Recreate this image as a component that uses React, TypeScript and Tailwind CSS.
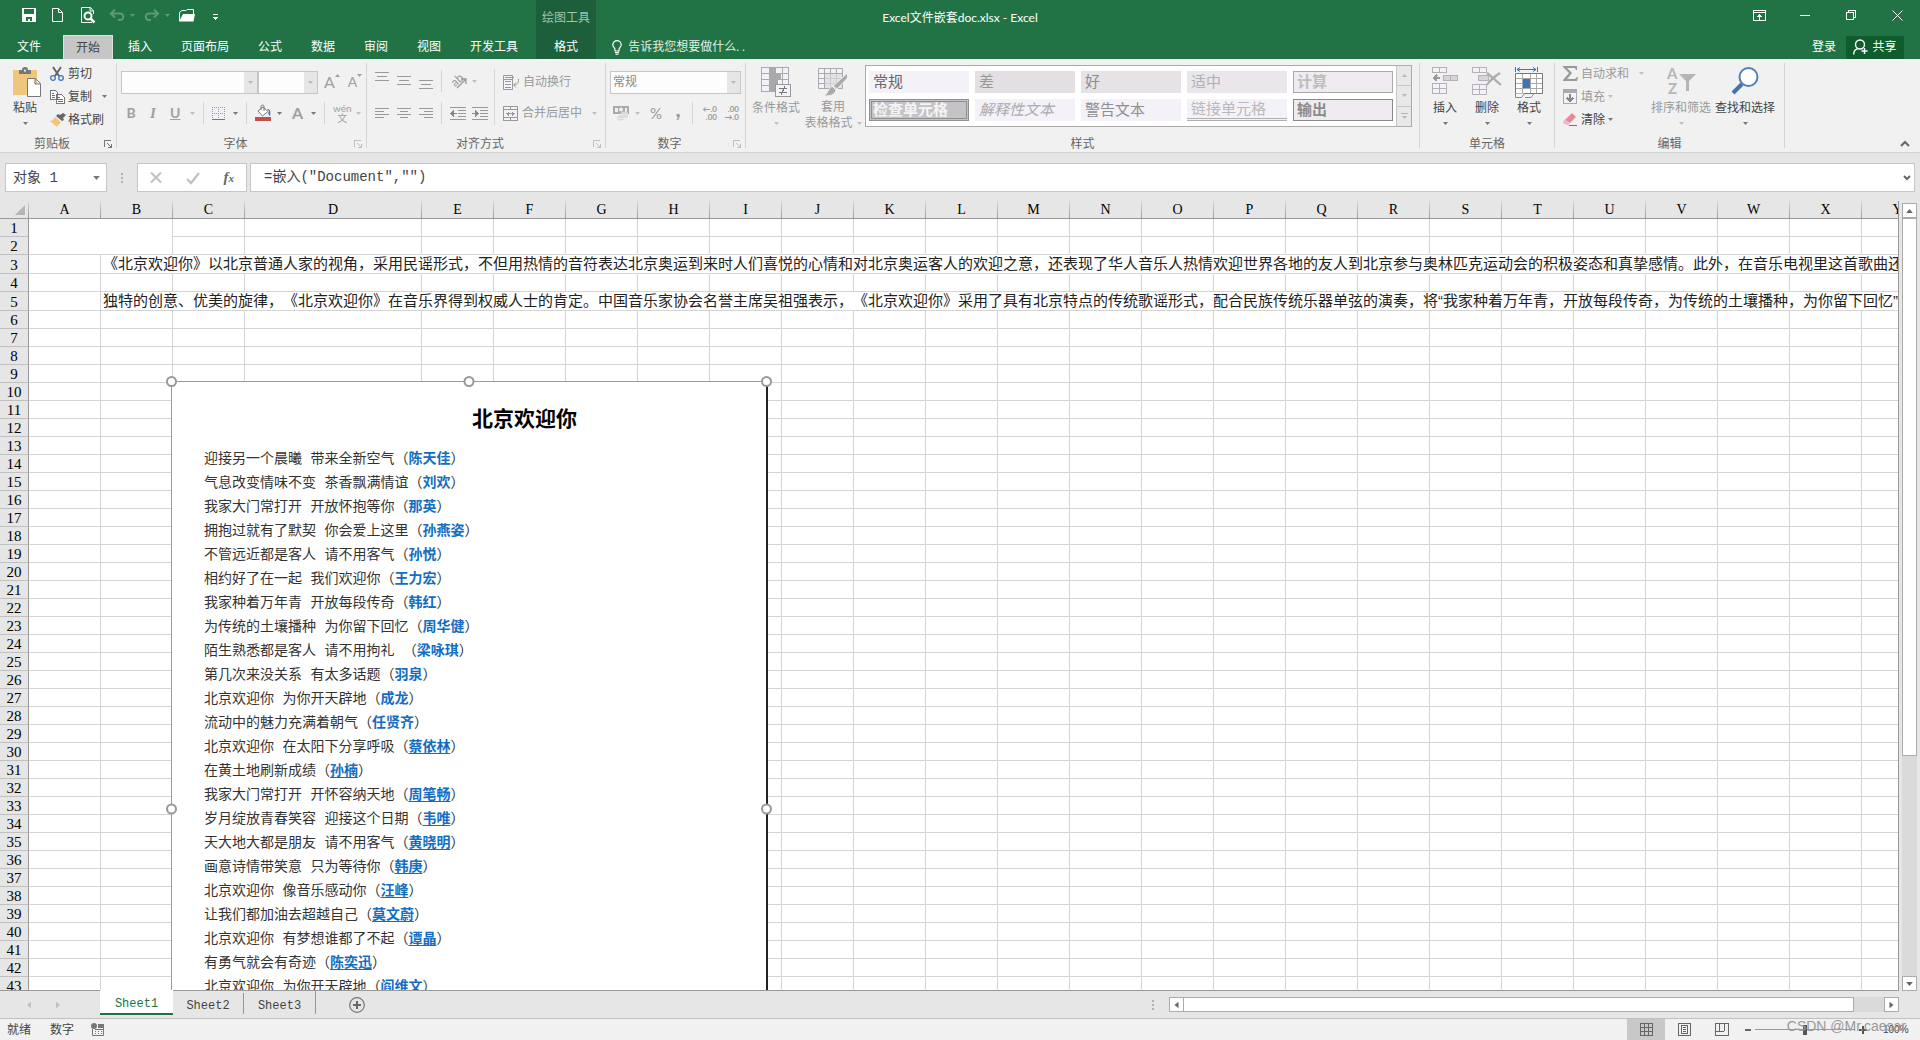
import React from "react";

type IconProps = { children: React.ReactNode; w: number; h: number; crisp?: boolean; className?: string };

const columns = "ABCDEFGHIJKLMNOPQRSTUVWXY".split("");
const rows = Array.from({ length: 43 }, (_, i) => i + 1);

const longText: Record<number, string> = {
  3: "《北京欢迎你》以北京普通人家的视角，采用民谣形式，不但用热情的音符表达北京奥运到来时人们喜悦的心情和对北京奥运客人的欢迎之意，还表现了华人音乐人热情欢迎世界各地的友人到北京参与奥林匹克运动会的积极姿态和真挚感情。此外，在音乐电视里这首歌曲还",
  5: "独特的创意、优美的旋律，《北京欢迎你》在音乐界得到权威人士的肯定。中国音乐家协会名誉主席吴祖强表示，《北京欢迎你》采用了具有北京特点的传统歌谣形式，配合民族传统乐器单弦的演奏，将“我家种着万年青，开放每段传奇，为传统的土壤播种，为你留下回忆”",
};

const lyrics: { line: string; singer: string; underline?: boolean }[] = [
  { line: "迎接另一个晨曦 带来全新空气", singer: "陈天佳" },
  { line: "气息改变情味不变 茶香飘满情谊", singer: "刘欢" },
  { line: "我家大门常打开 开放怀抱等你", singer: "那英" },
  { line: "拥抱过就有了默契 你会爱上这里", singer: "孙燕姿" },
  { line: "不管远近都是客人 请不用客气", singer: "孙悦" },
  { line: "相约好了在一起 我们欢迎你", singer: "王力宏" },
  { line: "我家种着万年青 开放每段传奇", singer: "韩红" },
  { line: "为传统的土壤播种 为你留下回忆", singer: "周华健" },
  { line: "陌生熟悉都是客人 请不用拘礼 ", singer: "梁咏琪" },
  { line: "第几次来没关系 有太多话题", singer: "羽泉" },
  { line: "北京欢迎你 为你开天辟地", singer: "成龙" },
  { line: "流动中的魅力充满着朝气", singer: "任贤齐" },
  { line: "北京欢迎你 在太阳下分享呼吸", singer: "蔡依林", underline: true },
  { line: "在黄土地刷新成绩", singer: "孙楠", underline: true },
  { line: "我家大门常打开 开怀容纳天地", singer: "周笔畅", underline: true },
  { line: "岁月绽放青春笑容 迎接这个日期", singer: "韦唯", underline: true },
  { line: "天大地大都是朋友 请不用客气", singer: "黄晓明", underline: true },
  { line: "画意诗情带笑意 只为等待你", singer: "韩庚", underline: true },
  { line: "北京欢迎你 像音乐感动你", singer: "汪峰", underline: true },
  { line: "让我们都加油去超越自己", singer: "莫文蔚", underline: true },
  { line: "北京欢迎你 有梦想谁都了不起", singer: "谭晶", underline: true },
  { line: "有勇气就会有奇迹", singer: "陈奕迅", underline: true },
  { line: "北京欢迎你 为你开天辟地", singer: "阎维文", underline: true },
];

const cellStyles = [
  { name: "常规", className: "bg-[#f5f1f8] pl-1 text-[#666]" },
  { name: "差", className: "bg-[#e3dfe2] pl-1 text-[#999]" },
  { name: "好", className: "bg-[#e6e2e5] pl-1 text-[#8c8c8c]" },
  { name: "适中", className: "bg-[#eae6eb] pl-1 text-[#b0b0b0]" },
  { name: "计算", className: "border border-[#a9a9a9] bg-[#efebf0] pl-[3px] font-bold text-[#bdbdbd]" },
  { name: "检查单元格", className: "border-3 border-double border-[#8f8f8f] bg-[#c6c3c8] pl-px font-bold text-[#f5f5f5]" },
  { name: "解释性文本", className: "bg-[#f5f1f8] pl-1 text-[#acacac] italic" },
  { name: "警告文本", className: "bg-[#f5f1f8] pl-1 text-[#8f8f8f]" },
  { name: "链接单元格", className: "border-b-3 border-double border-[#b0b0b0] bg-[#f5f1f8] pl-1 text-[#b9b9b9]" },
  { name: "输出", className: "border border-[#8a8a8a] bg-[#efebf0] pl-[3px] font-bold text-[#8c8c8c]" },
];

export default function App() {
  return (
    <div className="flex h-screen flex-col overflow-hidden bg-[#e6e6e6] font-['Lato','Noto_Sans_CJK_SC',sans-serif] text-[12px] leading-4 text-[#444]">
      <Header />
      <Ribbon />
      <FormulaBar />
      <main className="flex min-h-0 flex-1">
        <div className="relative min-w-0 flex-1 overflow-hidden border-r border-b border-[#999]">
          <Sheet />
          <EmbeddedDocument />
        </div>
        <VerticalScrollbar />
      </main>
      <SheetTabs />
      <StatusBar />
    </div>
  );
}

/* ---------- Title bar and ribbon tabs ---------- */

function Header() {
  return (
    <header className="relative flex h-[59px] shrink-0 bg-[#217346] text-white">
      <div className="flex flex-col">
        <div className="flex h-[35px] items-center pt-[5px] pl-[22px] pb-[10px]">
          <button aria-label="保存" className="mr-4">
            <Icon w={14} h={14} crisp>
              <path fill="#fff" fillRule="evenodd" d="M0 0h14v14H0zM2 1v5h10V1zM4 9h6v4H8v-2H6v2H4z" />
            </Icon>
          </button>
          <button aria-label="新建" className="mr-[18px]">
            <Icon w={11} h={14}>
              <path fill="none" stroke="#fff" d="M.5.5h6l4 4v9H.5zM6.500.5v4h4" />
            </Icon>
          </button>
          <button aria-label="打印预览" className="mr-3.5">
            <Icon w={15} h={16}>
              <path fill="none" stroke="#fff" d="M12.500 7V4L9.500.5H.5v15H11M9 .5V4h3.500" />
              <circle cx="7" cy="9" r="3.500" fill="none" stroke="#fff" strokeWidth="2" />
              <path stroke="#fff" strokeWidth="2.500" d="m9.500 11.500 4 4" />
            </Icon>
          </button>
          <button aria-label="撤消" className="mr-1.5">
            <UndoIcon />
          </button>
          <Arrow className="mr-[10px] text-[#5d9a78]" />
          <button aria-label="恢复" className="mr-1.5">
            <UndoIcon className="-scale-x-100" />
          </button>
          <Arrow className="mr-[9px] text-[#5d9a78]" />
          <button aria-label="打开" className="mr-[18px]">
            <Icon w={16} h={13}>
              <path fill="none" stroke="#fff" d="M.5 12V3.500L3 1.500h4l1-1h6.500V5" />
              <path fill="#fff" d="M0 12.500 4 5h12l-1.500 7.500z" />
            </Icon>
          </button>
          <button aria-label="自定义快速访问工具栏" className="pt-1">
            <Icon w={5} h={7} crisp>
              <path fill="#fff" d="M0 0h5v1H0zM0 3h5L2.500 6z" />
            </Icon>
          </button>
        </div>
        <nav className="flex h-6 gap-px">
          <button className="w-[62px] pr-1">文件</button>
          <button className="border border-b-0 border-[#e0e0e0] bg-[#c6c6c6] px-3 text-[#444]">开始</button>
          {["插入", "页面布局", "公式", "数据", "审阅", "视图", "开发工具"].map((tab) => (
            <button key={tab} className="px-3.5">
              {tab}
            </button>
          ))}
        </nav>
      </div>

      <div className="ml-1 flex w-[60px] flex-col items-center bg-[#1c5f3a]">
        <span className="h-[35px] pt-2.5 text-[#9fc6ae]">绘图工具</span>
        <button className="h-6 w-full">格式</button>
      </div>

      <div className="flex flex-1 flex-col">
        <div className="flex h-[35px] items-start justify-end">
          <WindowButton label="功能区显示选项">
            <Icon w={13} h={11} crisp>
              <path fill="none" stroke="#fff" d="M.5.5h12v10H.5zM1 2.500h11M6.500 4.500v5M4 6.500h1l1.500-2 1.500 2h1" />
            </Icon>
          </WindowButton>
          <WindowButton label="最小化">
            <Icon w={10} h={11} crisp>
              <path fill="#fff" d="M0 5h10v1H0z" />
            </Icon>
          </WindowButton>
          <WindowButton label="还原">
            <Icon w={10} h={10} crisp>
              <path fill="none" stroke="#fff" d="M.5 2.500h7v7h-7zM2.500 2V.5h7v7H8" />
            </Icon>
          </WindowButton>
          <WindowButton label="关闭">
            <Icon w={11} h={11}>
              <path stroke="#fff" d="m.5.5 10 10m0-10-10 10" />
            </Icon>
          </WindowButton>
        </div>
        <div className="flex h-6 items-center">
          <label className="ml-4 flex flex-1 items-center gap-1.5">
            <Icon w={10} h={15}>
              <path
                fill="none"
                stroke="#fff"
                strokeWidth="1.200"
                d="M3 11V9.500C3 8 .8 7.200.8 4.800a4.200 4.200 0 0 1 8.400 0C9.200 7.200 7 8 7 9.500V11zM3 12.500h4M3.500 14.200h3"
              />
            </Icon>
            <input
              aria-label="告诉我您想要做什么"
              placeholder="告诉我您想要做什么. ."
              className="w-40 bg-transparent outline-none placeholder:text-[#e2efe7]"
            />
          </label>
          <button className="mr-2.5">登录</button>
          <button className="mr-4 flex h-[23px] w-[58px] items-center justify-center gap-1 bg-[#0f5c2f]">
            <Icon w={15} h={16}>
              <g fill="none" stroke="#fff" strokeWidth="1.400">
                <circle cx="7" cy="5.500" r="4.500" />
                <path d="M.7 15.500c0-3 1.300-5 4-5.800M8.500 12h6M11.500 9v6" />
              </g>
            </Icon>
            共享
          </button>
        </div>
      </div>

      <h1 className="pointer-events-none absolute inset-x-0 top-2.5 text-center">Excel文件嵌套doc.xlsx - Excel</h1>
    </header>
  );
}

function WindowButton({ label, children }: { label: string; children: React.ReactNode }) {
  return (
    <button aria-label={label} className="flex h-[30px] w-[46px] items-center justify-center">
      {children}
    </button>
  );
}

/* ---------- Ribbon ---------- */

function Ribbon() {
  return (
    <section className="flex h-[94px] shrink-0 border-b border-[#d2d2d2] bg-[#f1f1f1]">
      <Group label="剪贴板" launcher="text-[#777]" className="w-[117px]">
        <div className="flex">
          <BigButton label="粘贴" className="ml-1.5 w-[38px]">
            <Icon w={28} h={30} className="ml-1">
              <path fill="#eec77c" d="M0 3h24v25H0z" />
              <path fill="#777" d="M6 3h3a3 3 0 0 1 6 0h3v4H6z" />
              <path fill="#f1f1f1" d="M11 3.500a1 1 0 0 1 2 0v1h-2z" />
              <path fill="#fff" stroke="#777" d="M14.500 11.500h8l5 5v13h-13zM22 11.500v5.500h5.500" />
            </Icon>
          </BigButton>
          <div className="ml-1.5 flex flex-col pt-[3px]">
            <SmallButton label="剪切">
              <Icon w={14} h={14}>
                <path stroke="#666" strokeWidth="2" d="m3 0 6 9M11 0 5 9" />
                <circle cx="3" cy="11" r="2.300" fill="none" stroke="#3e74b8" strokeWidth="1.300" />
                <circle cx="11" cy="11" r="2.300" fill="none" stroke="#3e74b8" strokeWidth="1.300" />
              </Icon>
            </SmallButton>
            <SmallButton label="复制" arrow="ml-2.5">
              <Icon w={15} h={14} crisp>
                <path fill="#fff" stroke="#777" d="M.5.5h5l2 2v7h-7zM6.500 4.500h5l3 3v6h-8z" />
                <path stroke="#3e74b8" d="M2 3.500h2M2 5.500h3M2 7.500h3M8 7.500h2M8 9.500h5M8 11.500h5" />
              </Icon>
            </SmallButton>
            <SmallButton label="格式刷">
              <Icon w={16} h={14}>
                <path fill="#666" d="M13 0 16 2l-3 3 1 2-2 1-6-5 2-2 2 1z" />
                <path fill="#eec77c" d="m5 4 6 5-4 5-7-6c2 0 4-2 5-4z" />
              </Icon>
            </SmallButton>
          </div>
        </div>
      </Group>

      <Group label="字体" launcher="text-[#c0c0c0]" className="w-[250px]">
        <div className="flex h-11 items-center pt-0.5 pl-1">
          <Combo label="字体" width="w-[137px]" />
          <Combo label="字号" width="w-[60px]" />
          <button aria-label="增大字号" className="ml-1.5 flex items-start text-[16px] text-[#a0a0a0]">
            A
            <Arrow className="rotate-180" />
          </button>
          <button aria-label="减小字号" className="ml-2 flex items-start text-[14px] text-[#a0a0a0]">
            A
            <Arrow />
          </button>
        </div>
        <div className="flex h-5 items-center pl-[9px] text-[14px] text-[#a0a0a0]">
          <button className="w-[10px] font-bold">B</button>
          <button className="ml-3 w-[10px] font-['Liberation_Serif',serif] text-[15px] font-bold italic">I</button>
          <button className="ml-3 w-[10px] font-bold underline">U</button>
          <Arrow className="ml-2.5 text-[#c0c0c0]" />
          <Divider className="mx-2" />
          <button aria-label="边框">
            <Icon w={13} h={13} crisp>
              <path fill="#f5f1f8" d="M0 0h13v13H0z" />
              <path stroke="#999" strokeDasharray="1 1" d="M0 .5h13M0 6.500h13M.5 0v12M6.500 0v12M12.500 0v12" />
              <path stroke="#777" d="M0 12.500h13" />
            </Icon>
          </button>
          <Arrow className="ml-2 text-[#777]" />
          <Divider className="mx-2" />
          <button aria-label="填充颜色">
            <Icon w={16} h={16}>
              <path fill="#fff" stroke="#777" d="m3 6 5-4 5 4.500L7.500 11z" />
              <path fill="none" stroke="#777" d="M6 5V1.500a1.500 1.500 0 0 1 3 0V6" />
              <path fill="#3e74b8" d="M12 4c3 0 4 2 3 7-2-1-2-3-1-5z" />
              <path fill="#c0504d" d="M0 12h16v4H0z" />
            </Icon>
          </button>
          <Arrow className="ml-1.5 text-[#777]" />
          <button className="ml-2.5 w-[11px] text-[16px] font-bold">A</button>
          <Arrow className="ml-2 text-[#777]" />
          <Divider className="mx-2" />
          <button aria-label="拼音指南" className="flex flex-col items-center text-[10px] leading-[10px]">
            <span>wén</span>
            <span>文</span>
          </button>
          <Arrow className="ml-1 text-[#c0c0c0]" />
        </div>
      </Group>

      <Group label="对齐方式" launcher="text-[#c0c0c0]" className="w-[239px]">
        <div className="flex">
          <div className="pl-2">
            <div className="flex h-11 items-center gap-2">
              <LinesIcon label="顶端对齐" d="M0 .5h14M2 4.500h10M0 8.500h14" className="pb-2" />
              <LinesIcon label="垂直居中" d="M0 .5h14M2 4.500h10M0 8.500h14" />
              <LinesIcon label="底端对齐" d="M0 .5h14M2 4.500h10M0 8.500h14" className="pt-2" />
              <Divider />
              <button aria-label="方向" className="flex items-center gap-1 text-[#a0a0a0]">
                <Icon w={18} h={16}>
                  <text x="1" y="12" fontSize="12" fill="#999" transform="rotate(-42 6 8)">
                    ab
                  </text>
                  <path fill="none" stroke="#999" strokeWidth="1.300" d="m7 15 8-8M11 6h5v5" />
                </Icon>
                <Arrow className="text-[#c0c0c0]" />
              </button>
            </div>
            <div className="flex h-5 items-center gap-2">
              <LinesIcon label="左对齐" d="M0 .5h14M0 3.500h9M0 6.500h14M0 9.500h9" />
              <LinesIcon label="居中" d="M0 .5h14M3 3.500h8M0 6.500h14M3 9.500h8" />
              <LinesIcon label="右对齐" d="M0 .5h14M5 3.500h9M0 6.500h14M5 9.500h9" />
              <Divider />
              <button aria-label="减少缩进量">
                <Icon w={16} h={13} crisp>
                  <path stroke="#999" d="M0 .5h16M8 3.500h8M8 6.500h8M8 9.500h8M0 12.500h16" />
                  <path fill="#888" d="M0 6.500 3 3h1v3h3v1H4v3H3z" />
                </Icon>
              </button>
              <button aria-label="增加缩进量" className="-ml-0.5">
                <Icon w={16} h={13} crisp>
                  <path stroke="#999" d="M0 .5h16M8 3.500h8M8 6.500h8M8 9.500h8M0 12.500h16" />
                  <path fill="#888" d="M7 6.500 4 3H3v3H0v1h3v3h1z" />
                </Icon>
              </button>
            </div>
          </div>
          <div className="mt-2.5 ml-1.5 h-14 w-px bg-[#d8d8d8]" />
          <div className="pl-2 text-[#999]">
            <button className="flex h-11 items-center gap-1 pt-0.5">
              <Icon w={16} h={15}>
                <path fill="#f5f1f8" stroke="#999" d="M.5.5h9v4h-9zM.5 4.500h9v10h-9z" />
                <path fill="none" stroke="#999" d="M2 2.500h9M2 6.500h6M2 9.500h6M2 12.500h6M15.500 4c0 4-1 6-4.500 6M13 7.500 10.500 10l2.500 2.500" />
              </Icon>
              自动换行
            </button>
            <button className="flex h-5 items-center gap-1">
              <Icon w={15} h={15} crisp>
                <path fill="#f5f1f8" stroke="#999" d="M.5.5h14v14H.5zM0 3.500h15M0 11.500h15M7.500 0v3M7.500 12v3" />
                <path stroke="#999" d="M3 7.500h9M5.500 5.500v4M9.500 5.500v4M4.500 6.500v2M10.500 6.500v2" />
              </Icon>
              合并后居中
              <Arrow className="ml-1.5 text-[#c0c0c0]" />
            </button>
          </div>
        </div>
      </Group>

      <Group label="数字" launcher="text-[#c0c0c0]" className="w-[140px]">
        <div className="flex h-11 items-center pt-0.5 pl-1">
          <Combo label="数字格式" width="w-[131px]" value="常规" />
        </div>
        <div className="flex h-5 items-center pl-[7px] text-[#999]">
          <button aria-label="会计数字格式">
            <Icon w={16} h={16}>
              <path fill="#aaa" d="M0 1h16v8H0z" />
              <path fill="#f1f1f1" d="M2 3h3v4H2zM12 3h2v4h-2z" />
              <circle cx="8" cy="4.500" r="2" fill="#f1f1f1" />
              <path fill="#dcd6dd" d="M8 8c0-2 7-2 7 0v3c0 2-7 2-7 0zM4 12c0-2 7-2 7 0v2c0 2-7 2-7 0z" />
              <path fill="none" stroke="#f1f1f1" d="M8 9c1 1.500 6 1.500 7 0M4 12.500c1 1.500 6 1.500 7 0" />
            </Icon>
          </button>
          <Arrow className="ml-1.5 text-[#c0c0c0]" />
          <button className="ml-2.5 w-3 text-[15px]">%</button>
          <button className="ml-3 w-2 pb-2 text-[22px] font-bold">,</button>
          <Divider className="mr-2 ml-2.5" />
          <button aria-label="增加小数位数">
            <DecimalIcon top="←.0" bottom=".00" />
          </button>
          <button aria-label="减少小数位数" className="ml-1.5">
            <DecimalIcon top=".00" bottom="→.0" />
          </button>
        </div>
      </Group>

      <Group label="样式" className="w-[674px]">
        <div className="flex">
          <BigButton label="条件格式" disabled className="ml-1.5 w-12">
            <Icon w={30} h={30} crisp>
              <path fill="#f5f1f8" stroke="#aaa" d="M.5.5h27v24H.5zM0 6.500h27M0 12.500h27M0 18.500h27M8.500 0v25M14.500 0v25M21.500 0v25" />
              <path fill="#aaa" d="M8 0h6v7H8zM8 7h12v6H8zM8 13h9v6H8zM8 19h6v6H8z" />
              <path fill="#f5f1f8" stroke="#999" d="M14.500 17.500h15v12h-15z" />
              <path stroke="#777" d="M18 21.500h8M18 25.500h8M24 19l-4 9" />
            </Icon>
          </BigButton>
          <button className="ml-1.5 flex w-[54px] flex-col items-center pt-[9px] text-[#999]">
            <Icon w={30} h={29}>
              <path fill="#f5f1f8" stroke="#aaa" d="M.5.5h24v20H.5zM0 5.500h24M0 10.500h24M0 15.500h24M6.500 0v20M12.500 0v20M18.500 0v20" />
              <path fill="#dcd8de" fillOpacity=".7" d="M7 6h17v14H7z" />
              <path fill="#aaa" stroke="#f1f1f1" d="M29.500 5v5L19 21l-4-3zM14 18l4 4c-1 5-6 6-12 6 4-2 4-8 8-10z" />
            </Icon>
            <span className="mt-0.5">套用</span>
            <span className="flex items-center gap-1 whitespace-nowrap">
              表格格式
              <Arrow className="text-[#c0c0c0]" />
            </span>
          </button>
          <div className="mt-1.5 ml-[5px] flex h-[62px] border border-[#ababab] bg-white">
            <div className="grid grid-cols-[repeat(5,100px)] grid-rows-[22px_22px] gap-1.5 px-[3px] pt-[5px]">
              {cellStyles.map((style) => (
                <button
                  key={style.name}
                  className={`flex items-center pb-0.5 text-left text-[15px] leading-4 ${style.className}`}
                >
                  {style.name}
                </button>
              ))}
            </div>
            <div className="flex w-[15px] flex-col divide-y divide-[#c6c6c6] border-l border-[#c6c6c6] bg-[#e8e8e8] text-[#b8b8b8]">
              <button aria-label="上一行" className="flex flex-1 items-center justify-center">
                <Arrow className="rotate-180" />
              </button>
              <button aria-label="下一行" className="flex flex-1 items-center justify-center">
                <Arrow />
              </button>
              <button aria-label="其他" className="flex flex-1 flex-col items-center justify-center gap-0.5">
                <span className="h-px w-[7px] bg-current" />
                <Arrow />
              </button>
            </div>
          </div>
        </div>
      </Group>

      <Group label="单元格" className="w-[135px]">
        <div className="flex pl-1">
          <BigButton label="插入" className="w-[42px]">
            <Icon w={27} h={28} crisp>
              <path fill="#f5f1f8" stroke="#b5b0b6" d="M.5.5h14v5H.5zM7.500 1v5M.5 16.500h14v10H.5zM7.500 17v10M1 21.500h14" />
              <path fill="#d8d4da" stroke="#b5b0b6" d="M11.500 8.500h14v5h-14zM18.500 9v5" />
              <path fill="none" stroke="#999" strokeWidth="2" d="M2 11h6M5 8l-3 3 3 3" />
            </Icon>
          </BigButton>
          <BigButton label="删除" className="w-[42px]">
            <Icon w={30} h={28}>
              <path fill="#f5f1f8" stroke="#b5b0b6" d="M.5.5h14v5H.5zM7.500 1v5M.5 17.500h14v10H.5zM7.500 18v10M1 22.500h14" />
              <path fill="#d8d4da" stroke="#b5b0b6" d="M6.500 8.500h10v5h-10z" />
              <path stroke="#b0acb1" strokeWidth="2.200" d="M15 6c4 3 9 8 14 12M28 6c-5 3-10 7-13 12" />
            </Icon>
          </BigButton>
          <BigButton label="格式" className="w-[42px]">
            <Icon w={28} h={31}>
              <path fill="none" stroke="#3e74b8" d="M.5 0v5M22.500 0v5M2 2.500h19M5 .5l-3 2 3 2M18 .5l3 2-3 2" />
              <path fill="#fff" stroke="#777" d="M.5 6.500h27v20H.5z" />
              <path fill="none" stroke="#aaa" d="M1 11.500h26M1 21.500h26M7.500 7v19M15.500 7v19M21.500 7v19M1 16.500h7M16 16.500h11" />
              <path fill="#3e74b8" d="M8 12h7v9H8z" />
              <path fill="#f8f8f8" stroke="#888" d="M.5 26.500v4h6l3-4M10 30.500h6l3-4" />
            </Icon>
          </BigButton>
        </div>
      </Group>

      <Group label="编辑" className="w-[230px]">
        <div className="flex">
          <div className="flex w-[91px] flex-col pt-[3px] pl-2">
            <SmallButton label="自动求和" disabled arrow="ml-2.5">
              <Icon w={15} h={15}>
                <path fill="#999" d="M0 0h14v4h-1l-1-2H4l5 5-5 6h8l2-2h1l-1 4H0v-1l6-7-6-6z" />
              </Icon>
            </SmallButton>
            <SmallButton label="填充" disabled arrow="ml-[3px]">
              <Icon w={15} h={15} crisp>
                <path fill="#f5f1f8" stroke="#aaa" d="M.5.5h13v14H.5z" />
                <path fill="#aaa" d="M0 0h14v4H0z" />
                <path fill="none" stroke="#888" strokeWidth="2" d="M7 5v7M4 9l3 3 3-3" />
              </Icon>
            </SmallButton>
            <SmallButton label="清除" arrow="ml-[3px]">
              <Icon w={15} h={13}>
                <path fill="#e8899a" d="m9 0 4 4-6 6-5-3z" />
                <path fill="#f2b7c1" d="m2 6 5 5-2 1-4-1-1-2z" />
                <path stroke="#777" d="M6 12.500h8" />
              </Icon>
            </SmallButton>
          </div>
          <BigButton label="排序和筛选" disabled className="ml-0.5 w-[66px]">
            <Icon w={29} h={28}>
              <text x="0" y="12" fontSize="15" fontWeight="bold" fill="#b5b5b5">
                A
              </text>
              <text x="1" y="27" fontSize="15" fontWeight="bold" fill="#b5b5b5">
                Z
              </text>
              <path fill="#b5b5b5" d="M12 7h17l-7 7v10h-3V14z" />
            </Icon>
          </BigButton>
          <BigButton label="查找和选择" className="w-[62px]">
            <Icon w={28} h={28}>
              <path stroke="#4472ae" strokeWidth="4" d="m2 26 9-9" />
              <circle cx="17.500" cy="10" r="9" fill="#fff" stroke="#4a80bd" strokeWidth="2" />
            </Icon>
          </BigButton>
        </div>
      </Group>

      <div className="flex flex-1 items-end justify-end pr-2.5 pb-[5px]">
        <button aria-label="折叠功能区">
          <Icon w={10} h={7}>
            <path fill="none" stroke="#666" strokeWidth="2" d="m1 6 4-4 4 4" />
          </Icon>
        </button>
      </div>
    </section>
  );
}

function Group({
  label,
  launcher,
  className,
  children,
}: {
  label: string;
  launcher?: string;
  className: string;
  children: React.ReactNode;
}) {
  return (
    <div className={`flex shrink-0 ${className}`}>
      <div className="flex min-w-0 flex-1 flex-col">
        <div className="flex-1">{children}</div>
        <div className="flex h-4 items-center">
          <span className="flex-1 text-center text-[#666]">{label}</span>
          {launcher && (
            <button aria-label={`${label}设置`} className={`mr-1 ${launcher}`}>
              <Icon w={8} h={8} crisp>
                <path fill="none" stroke="currentColor" d="M.5 7V.5H7M3 3l4 4M7.500 4v3.500H4" />
              </Icon>
            </button>
          )}
        </div>
      </div>
      <div className="my-1 w-px bg-[#d5d5d5]" />
    </div>
  );
}

function BigButton({
  label,
  disabled,
  className,
  children,
}: {
  label: string;
  disabled?: boolean;
  className: string;
  children: React.ReactNode;
}) {
  return (
    <button className={`flex flex-col items-center pt-2 ${disabled ? "text-[#999]" : "text-[#444]"} ${className}`}>
      <span className="flex h-[33px] items-start">{children}</span>
      <span className="whitespace-nowrap">{label}</span>
      <Arrow className={`mt-1.5 ${disabled ? "text-[#c0c0c0]" : "text-[#777]"}`} />
    </button>
  );
}

function SmallButton({
  label,
  disabled,
  arrow,
  children,
}: {
  label: string;
  disabled?: boolean;
  arrow?: string;
  children: React.ReactNode;
}) {
  return (
    <button className={`flex h-[23px] items-center whitespace-nowrap ${disabled ? "text-[#999]" : "text-[#444]"}`}>
      <span className="w-[18px] shrink-0">{children}</span>
      {label}
      {arrow && <Arrow className={`${arrow} ${disabled ? "text-[#c0c0c0]" : "text-[#777]"}`} />}
    </button>
  );
}

function Combo({ label, width, value = "" }: { label: string; width: string; value?: string }) {
  return (
    <div className={`flex h-[23px] border border-[#c6c6c6] bg-[#fdfdfd] ${width}`}>
      <input aria-label={label} defaultValue={value} className="w-0 flex-1 pl-0.5 text-[#888] outline-none" />
      <button aria-label={`${label}列表`} className="flex w-[13px] items-center justify-center bg-[#e6e6e6] text-[#b8b8b8]">
        <Arrow />
      </button>
    </div>
  );
}

/* ---------- Formula bar ---------- */

function FormulaBar() {
  return (
    <section className="flex h-12 shrink-0 pt-2.5 pr-[5px] pb-[9px] pl-[5px] font-['Liberation_Mono','Noto_Sans_CJK_SC',monospace] text-[14px]">
      <div className="flex w-[102px] items-center border border-[#c6c6c6] bg-white pr-1.5">
        <input aria-label="名称框" defaultValue="对象 1" className="w-0 flex-1 pl-[7px] outline-none" />
        <Arrow className="h-1 w-[7px] text-[#777]" />
      </div>
      <div className="flex w-[30px] flex-col items-center justify-center gap-0.5">
        <span className="size-0.5 bg-[#b0b0b0]" />
        <span className="size-0.5 bg-[#b0b0b0]" />
        <span className="size-0.5 bg-[#b0b0b0]" />
      </div>
      <div className="flex w-[110px] items-center justify-between border border-[#c6c6c6] bg-white px-3">
        <button aria-label="取消">
          <Icon w={12} h={11}>
            <path stroke="#c0c0c0" strokeWidth="2" d="m1 .5 10 10M11 .5l-10 10" />
          </Icon>
        </button>
        <button aria-label="输入">
          <Icon w={14} h={12}>
            <path fill="none" stroke="#c0c0c0" strokeWidth="2.200" d="m1 7 4 4 8-10" />
          </Icon>
        </button>
        <button className="font-['Liberation_Serif',serif] text-[15px] font-bold text-[#666] italic">
          f<span className="text-[11px]">x</span>
        </button>
      </div>
      <div className="ml-[3px] flex flex-1 items-center border border-[#c6c6c6] bg-white pr-[3px]">
        <input
          aria-label="编辑栏"
          defaultValue={'=嵌入("Document","")'}
          className="w-0 flex-1 pb-0.5 pl-[13px] outline-none"
        />
        <button aria-label="展开编辑栏">
          <Icon w={8} h={6}>
            <path fill="none" stroke="#666" strokeWidth="2" d="m1 1 3 3 3-3" />
          </Icon>
        </button>
      </div>
    </section>
  );
}

/* ---------- Worksheet ---------- */

function Sheet() {
  return (
    <table className="w-[1934px] table-fixed border-separate border-spacing-0 bg-white font-['Liberation_Serif','Noto_Sans_CJK_SC',serif] text-[15px] leading-4 text-[#222]">
      <colgroup>
        <col className="w-[29px]" />
        {columns.map((col) => (
          <col key={col} className={col === "D" ? "w-[177px]" : "w-[72px]"} />
        ))}
      </colgroup>
      <thead>
        <tr>
          <th
            aria-label="全选"
            className="h-[18px] border-b border-[#999] bg-[#e6e6e6] bg-linear-to-b from-[#d8d8d8] to-[#999] bg-[length:1px_100%] bg-right bg-no-repeat p-0"
          >
            <Icon w={10} h={10} className="ml-[15px]">
              <path fill="#b5b5b5" d="M10 0v10H0z" />
            </Icon>
          </th>
          {columns.map((col) => (
            <th
              key={col}
              className="h-[18px] border-b border-[#999] bg-[#e6e6e6] bg-linear-to-b from-[#d8d8d8] to-[#999] bg-[length:1px_100%] bg-right bg-no-repeat p-0 pt-px pr-px text-[14px] font-normal text-black"
            >
              {col}
            </th>
          ))}
        </tr>
      </thead>
      <tbody>
        {rows.map((row) => (
          <SheetRow key={row} row={row} />
        ))}
      </tbody>
    </table>
  );
}

function SheetRow({ row }: { row: number }) {
  const text = longText[row];
  const height = text ? "h-[19px]" : "h-[18px]";
  const cell = `border-r border-b border-[#d4d4d4] p-0 ${height}`;

  // A1:B2 is one merged cell, and the long text runs over every cell right of B
  let cells = columns;
  if (row === 1) cells = columns.slice(1);
  if (row === 2) cells = columns.slice(2);
  if (text) cells = columns.slice(0, 2);

  return (
    <tr>
      <th className={`border-r border-b border-r-[#999] border-b-[#c0c0c0] bg-[#e6e6e6] p-0 pt-px font-normal text-black ${height}`}>
        {row}
      </th>
      {cells.map((col, i) => {
        if (row === 1 && i === 0) return <td key={col} colSpan={2} rowSpan={2} className={cell} />;
        if (text && i === 1) {
          return (
            <td
              key={col}
              colSpan={24}
              className={`${cell} pl-0.5 whitespace-nowrap [text-spacing-trim:space-all] ${
                row === 5 ? "font-['Liberation_Sans','Noto_Sans_CJK_SC',sans-serif]" : ""
              }`}
            >
              {text}
            </td>
          );
        }
        return <td key={col} className={cell} />;
      })}
    </tr>
  );
}

function EmbeddedDocument() {
  return (
    <article className="absolute top-[180px] left-[171px] h-[856px] w-[597px] border border-r-2 border-[#999] border-r-[#222] bg-white font-['Liberation_Mono','Noto_Sans_CJK_SC',monospace]">
      <h2 className="pt-[25px] pl-[300px] text-[21px] leading-7 font-bold text-black">北京欢迎你</h2>
      <div className="pt-3 pl-8 text-[14px] leading-6 whitespace-pre text-[#333] [text-spacing-trim:space-all]">
        {lyrics.map(({ line, singer, underline }, i) => (
          <p key={i}>
            {line}（
            <a href="#" className={`font-bold text-[#136ec2] ${underline ? "underline underline-offset-2" : ""}`}>
              {singer}
            </a>
            ）
          </p>
        ))}
      </div>
      <Handle className="-top-1.5 -left-1.5" />
      <Handle className="-top-1.5 left-1/2 -translate-x-1/2" />
      <Handle className="-top-1.5 -right-1.5" />
      <Handle className="top-1/2 -left-1.5 -translate-y-1/2" />
      <Handle className="top-1/2 -right-1.5 -translate-y-1/2" />
    </article>
  );
}

function Handle({ className }: { className: string }) {
  return <span className={`absolute size-[11px] rounded-full border-2 border-[#999] bg-white ${className}`} />;
}

function VerticalScrollbar() {
  return (
    <div className="flex w-[21px] flex-col pt-0.5 pr-[3px] pl-[3px]">
      <button aria-label="向上滚动" className="flex h-[15px] items-center justify-center border border-[#ababab] bg-white text-[#666]">
        <Arrow className="h-1 w-[7px] rotate-180" />
      </button>
      <div className="flex flex-1 flex-col bg-[#dadada]">
        <div className="h-[71%] border border-[#ababab] bg-white" />
      </div>
      <button aria-label="向下滚动" className="flex h-[15px] items-center justify-center border border-[#ababab] bg-white text-[#666]">
        <Arrow className="h-1 w-[7px]" />
      </button>
    </div>
  );
}

/* ---------- Sheet tabs and status bar ---------- */

function SheetTabs() {
  return (
    <section className="flex h-[27px] shrink-0 font-['Liberation_Mono',monospace]">
      <div className="flex w-[100px] items-center gap-[21px] pl-[25px] text-[#c0c0c0]">
        <button aria-label="上一个工作表">
          <Arrow className="h-1 w-2 rotate-90" />
        </button>
        <button aria-label="下一个工作表">
          <Arrow className="h-1 w-2 -rotate-90" />
        </button>
      </div>
      <button className="relative z-10 -mt-px h-[25px] w-[73px] border-b-2 border-[#217346] bg-white pt-1 text-[#217346]">Sheet1</button>
      <div className="flex h-[23px] divide-x divide-[#999] border-r border-[#999] pt-0.5">
        <button className="w-[71px] pt-1">Sheet2</button>
        <button className="w-[71px] pt-1">Sheet3</button>
      </div>
      <button aria-label="新工作表" className="ml-[33px]">
        <Icon w={16} h={16}>
          <circle cx="8" cy="8" r="7.300" fill="none" stroke="#777" strokeWidth="1.200" />
          <path stroke="#666" strokeWidth="2" d="M8 4v8M4 8h8" />
        </Icon>
      </button>
      <div className="flex flex-1 items-center justify-end pr-[21px]">
        <div className="mr-[15px] flex flex-col gap-0.5">
          <span className="size-0.5 bg-[#b0b0b0]" />
          <span className="size-0.5 bg-[#b0b0b0]" />
          <span className="size-0.5 bg-[#b0b0b0]" />
        </div>
        <div className="flex h-[15px] w-[38%] max-w-[730px] min-w-[200px] grow bg-[#dadada]">
          <button aria-label="向左滚动" className="flex w-[15px] items-center justify-center border border-[#ababab] bg-white text-[#666]">
            <Arrow className="h-1 w-[7px] shrink-0 rotate-90" />
          </button>
          <div className="-ml-px flex-1 border border-[#ababab] bg-white" />
          <button aria-label="向右滚动" className="ml-[30px] flex w-[15px] items-center justify-center border border-[#ababab] bg-white text-[#666]">
            <Arrow className="h-1 w-[7px] shrink-0 -rotate-90" />
          </button>
        </div>
      </div>
    </section>
  );
}

function StatusBar() {
  return (
    <footer className="relative flex h-[22px] shrink-0 items-center border-t border-[#c0c0c0] bg-[#f1f1f1] pl-[7px]">
      <span>就绪</span>
      <span className="ml-[19px]">数字</span>
      <button aria-label="录制宏" className="ml-[17px]">
        <Icon w={13} h={13}>
          <path fill="none" stroke="#777" d="M1.500 6v6.500h11v-11H7M4 6.500h8" />
          <path fill="#777" d="M7 1h6v4H7zM4 8h1v1H4zm3 0h1v1H7zm3 0h1v1h-1zm-6 2h1v1H4zm3 0h1v1H7zm3 0h1v1h-1z" />
          <circle cx="3" cy="3" r="3" fill="#777" />
        </Icon>
      </button>
      <div className="ml-auto flex items-center self-stretch pr-3 text-[#666]">
        <button aria-label="普通" className="flex h-full w-[38px] items-center justify-center bg-[#c8c8c8]">
          <Icon w={13} h={13} crisp>
            <path fill="none" stroke="#666" d="M.5.5h12v12H.5zM4.500 0v13M8.500 0v13M0 4.500h13M0 8.500h13" />
          </Icon>
        </button>
        <button aria-label="页面布局" className="flex w-[38px] items-center justify-center">
          <Icon w={13} h={13} crisp>
            <path fill="none" stroke="#666" d="M.5.5h12v12H.5zM3.500 2.500h6v8h-6zM5 4.500h3M5 6.500h3M5 8.500h3" />
          </Icon>
        </button>
        <button aria-label="分页预览" className="flex w-[38px] items-center justify-center">
          <Icon w={14} h={13} crisp>
            <path fill="none" stroke="#666" d="M.5.5h13v12H.5zM4.500 0v8M9.500 0v8M0 8.500h9" />
          </Icon>
        </button>
        <button aria-label="缩小" className="ml-1 h-0.5 w-1.5 bg-[#666]" />
        <div className="ml-1 flex w-[100px] items-center justify-center">
          <span className="h-px flex-1 bg-[#999]" />
          <span className="h-2.5 w-1 bg-[#555]" />
          <span className="h-px flex-1 bg-[#999]" />
        </div>
        <button aria-label="放大" className="ml-1">
          <Icon w={8} h={8} crisp>
            <path stroke="#555" strokeWidth="2" d="M4 0v8M0 4h8" />
          </Icon>
        </button>
        <button className="ml-4 w-[25px] font-['Liberation_Sans',sans-serif] text-[10px] text-[#444]">100%</button>
      </div>
      <span className="pointer-events-none absolute right-3.5 bottom-1.5 font-['Liberation_Sans',sans-serif] text-[14px] text-[#999]">
        CSDN @Mr.caesar
      </span>
    </footer>
  );
}

/* ---------- Shared bits ---------- */

function Icon({ children, w, h, crisp, className = "" }: IconProps) {
  return (
    <svg
      width={w}
      height={h}
      viewBox={`0 0 ${w} ${h}`}
      shapeRendering={crisp ? "crispEdges" : "auto"}
      className={`shrink-0 overflow-visible ${className}`}
      aria-hidden="true"
    >
      {children}
    </svg>
  );
}

function Arrow({ className = "" }: { className?: string }) {
  return (
    <Icon w={5} h={3} className={className}>
      <path fill="currentColor" d="M0 0h5L2.500 3z" />
    </Icon>
  );
}

function Divider({ className = "" }: { className?: string }) {
  return <span className={`h-[22px] w-px bg-[#d5d5d5] ${className}`} />;
}

function UndoIcon({ className }: { className?: string }) {
  return (
    <Icon w={14} h={12} className={className}>
      <path fill="none" stroke="#5d9a78" strokeWidth="2" d="M1 4.500h8.500c5 0 5 6.500 0 6.500H8M5 .5l-4 4 4 4" />
    </Icon>
  );
}

function LinesIcon({ label, d, className = "" }: { label: string; d: string; className?: string }) {
  return (
    <button aria-label={label} className={className}>
      <Icon w={14} h={10} crisp>
        <path stroke="#999" d={d} />
      </Icon>
    </button>
  );
}

function DecimalIcon({ top, bottom }: { top: string; bottom: string }) {
  return (
    <span className="flex w-4 flex-col items-end text-[8px] leading-2 font-bold">
      <span>{top}</span>
      <span>{bottom}</span>
    </span>
  );
}
